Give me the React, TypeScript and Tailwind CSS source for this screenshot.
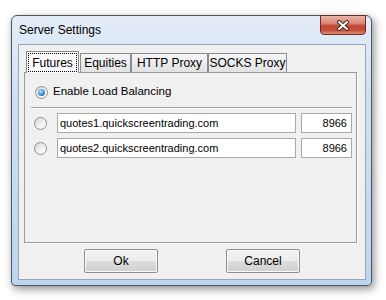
import React from "react";

const font = { fontFamily: '"Liberation Sans", Arial, sans-serif' };

function Radio({ checked }: { checked?: boolean }) {
  return (
    <span className="flex h-[13px] w-[13px] shrink-0 items-center justify-center rounded-full border border-[#8e8f8f] bg-[linear-gradient(135deg,#d4d4d4,#f4f4f4_60%,#ffffff)]">
      {checked && (
        <span className="h-[7px] w-[7px] rounded-full bg-[radial-gradient(circle_at_40%_35%,#b6e3ff,#3d8fd0_55%,#174a80)]" />
      )}
    </span>
  );
}

function Field({ value, w, right }: { value: string; w: string; right?: boolean }) {
  return (
    <div
      className={`flex h-[20px] items-center border border-[#a9a9a9] bg-white text-[11px] text-black ${w} ${
        right ? "justify-end pr-[4px]" : "pl-[2px]"
      }`}
    >
      {value}
    </div>
  );
}

function Tab({ label, active, w, ml }: { label: string; active?: boolean; w: string; ml: string }) {
  if (active) {
    return (
      <div className={`flex h-[22px] border border-b-0 border-[#898c95] bg-[#fcfcfc] px-[1px] pb-[1px] pt-[1px] ${w} ${ml}`}>
        <div className="flex flex-1 items-center justify-center border border-dotted border-black">{label}</div>
      </div>
    );
  }
  return (
    <div
      className={`mb-px flex h-[19px] items-center justify-center border border-b-0 border-[#898c95] bg-[linear-gradient(to_bottom,#f6f6f6,#ececec_50%,#e2e2e2)] ${w} ${ml}`}
    >
      {label}
    </div>
  );
}

function Button({ label }: { label: string }) {
  return (
    <div className="flex h-[24px] w-[74px] items-center justify-center rounded-[2px] border border-[#8e8e8e] bg-[linear-gradient(to_bottom,#f4f4f4,#ececec_48%,#dcdcdc_52%,#d0d0d0)] text-[12px] text-black shadow-[inset_0_0_0_1px_#fbfbfb]">
      {label}
    </div>
  );
}

export default function App() {
  return (
    <div className="h-[300px] w-[386px] bg-white pl-[11px] pt-[15px]" style={font}>
      <div className="relative flex h-[271px] w-[361px] flex-col rounded-b-[4px] rounded-t-[6px] border border-[#4e5660] bg-[linear-gradient(to_bottom,#e4edf8,#cfe0f3_30%,#bcd5ef)] shadow-[2px_3px_8px_rgba(0,0,0,0.45)]">
        <div className="flex h-[28px] items-center pl-[7px] text-[12px] text-black">Server Settings</div>

        <div className="absolute right-[5px] top-[-1px] flex h-[20px] w-[46px] items-center justify-center rounded-b-[4px] border border-[#6e2a21] bg-[linear-gradient(to_bottom,#eab3a7,#d9897a_40%,#c44530_55%,#c9513b_80%,#e3907d)]">
          <svg width="14" height="11" viewBox="0 0 14 11">
            <path d="M3 2 L11 9 M11 2 L3 9" stroke="#3b2a28" strokeWidth="4" strokeLinecap="round" />
            <path d="M3 2 L11 9 M11 2 L3 9" stroke="#ffffff" strokeWidth="2" strokeLinecap="round" />
          </svg>
        </div>

        <div className="ml-[6px] flex h-[236px] w-[348px] flex-col border border-[#9aa6b4] bg-[#f0f0f0] pl-[5px] pt-[6px] text-[12px] text-black">
          <div className="relative z-10 -mb-px flex h-[22px] items-end">
            <Tab label="Futures" active w="w-[53px]" ml="ml-[2px]" />
            <Tab label="Equities" w="w-[51px]" ml="ml-[1px]" />
            <Tab label="HTTP Proxy" w="w-[77px]" ml="ml-0" />
            <Tab label="SOCKS Proxy" w="w-[79px]" ml="ml-0" />
          </div>
          <div className="flex h-[171px] w-[333px] flex-col border border-[#9a9a9a] bg-[#f0f0f0] shadow-[1px_1px_0_#ffffff]">
            <div className="ml-[10px] mt-[9px] flex h-[20px] items-center gap-[5px] text-[11.5px]">
              <Radio checked />
              <span>Enable Load Balancing</span>
            </div>
            <div className="ml-[6px] mt-[5px] h-[2px] w-[321px] border-b border-t border-b-white border-t-[#a0a0a0]" />
            <div className="ml-[9px] mt-[4px] flex items-center">
              <Radio />
              <div className="ml-[10px] flex gap-[5px]">
                <Field value="quotes1.quickscreentrading.com" w="w-[239px]" />
                <Field value="8966" w="w-[51px]" right />
              </div>
            </div>
            <div className="ml-[9px] mt-[5px] flex items-center">
              <Radio />
              <div className="ml-[10px] flex gap-[5px]">
                <Field value="quotes2.quickscreentrading.com" w="w-[239px]" />
                <Field value="8966" w="w-[51px]" right />
              </div>
            </div>
          </div>
          <div className="mt-[6px] flex justify-center gap-[68px] pr-[5px]">
            <Button label="Ok" />
            <Button label="Cancel" />
          </div>
        </div>
      </div>
    </div>
  );
}
